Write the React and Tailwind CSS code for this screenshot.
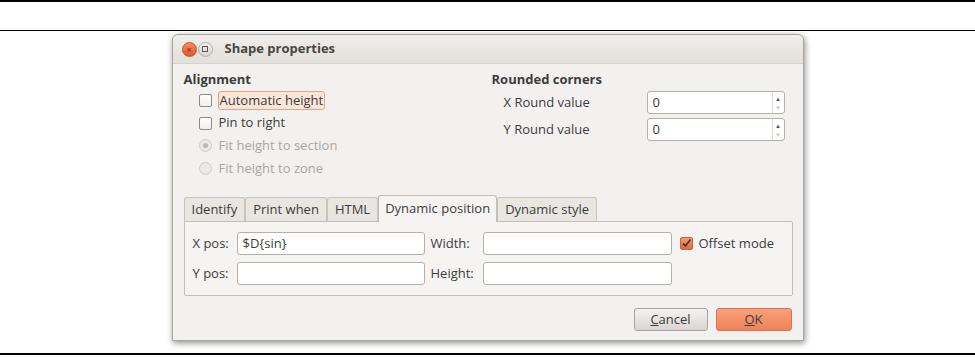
import React from 'react';

const font = { fontFamily: '"Open Sans", "DejaVu Sans", sans-serif' };

function Checkbox({ checked }) {
  if (checked) {
    return (
      <span className="flex h-[13px] w-[13px] items-center justify-center rounded-[2px] border border-[#c8623a] bg-gradient-to-b from-[#f39a72] to-[#e06a3c]">
        <svg width="11" height="11" viewBox="0 0 11 11">
          <path d="M2 5.5 L4.5 8 L9.5 1.5" fill="none" stroke="#3c3c3c" strokeWidth="1.8" />
        </svg>
      </span>
    );
  }
  return <span className="h-[13px] w-[13px] rounded-[2px] border border-[#8f8a84] bg-gradient-to-b from-white to-[#f0eeec]" />;
}

function Radio({ checked }) {
  return (
    <span className="flex h-[13px] w-[13px] items-center justify-center rounded-full border border-[#cfcbc6] bg-[#ebe9e6]">
      {checked && <span className="h-[5px] w-[5px] rounded-full bg-[#bdb9b4]" />}
    </span>
  );
}

function Spin({ value }) {
  return (
    <div className="flex h-[23px] w-[138px] rounded-[3px] border border-[#b5b0aa] bg-white">
      <div className="flex flex-1 items-center pl-[5px] text-[13px] text-[#3c3c3c]">{value}</div>
      <div className="flex w-[12px] flex-col items-center justify-center border-l border-[#e2dfdb] text-[7px] leading-[9px]">
        <span className="text-[#555]">▴</span>
        <span className="text-[#c9c5c0]">▾</span>
      </div>
    </div>
  );
}

function Field({ value, w }) {
  return (
    <div className={`flex h-[23px] items-center rounded-[3px] border border-[#b5b0aa] bg-white pl-[5px] text-[13px] text-[#3c3c3c] ${w}`}>
      {value}
    </div>
  );
}

export default function App() {
  const tabs = ['Identify', 'Print when', 'HTML', 'Dynamic position', 'Dynamic style'];
  return (
    <div className="flex h-[357px] w-[975px] flex-col bg-white" style={font}>
      <div className="h-[2px] bg-black" />
      <div className="mt-[28px] h-px bg-black" />

      <div className="mx-auto mt-[3px] flex h-[307px] w-[632px] flex-col rounded-t-[6px] border border-[#a9a49d] bg-[#f2f1f0] shadow-[1px_2px_6px_rgba(0,0,0,0.45)]">
        {/* Title bar */}
        <div className="flex h-[29px] items-center rounded-t-[6px] border-b border-[#d6d2cc] bg-gradient-to-b from-[#f0eeeb] to-[#e3dfda] pl-[9px]">
          <span className="flex h-[15px] w-[15px] items-center justify-center rounded-full border border-[#c4532c] bg-gradient-to-b from-[#f58a60] to-[#e0572b] text-[9px] leading-none text-[#6b2a14]">×</span>
          <span className="ml-[1px] flex h-[15px] w-[15px] items-center justify-center rounded-full border border-[#b3ada6] bg-gradient-to-b from-[#f4f2ef] to-[#d8d4cf]">
            <span className="h-[6px] w-[6px] border border-[#5a5650]" />
          </span>
          <span className="ml-[12px] text-[13px] font-bold text-[#4a4641]">Shape properties</span>
        </div>

        {/* Body */}
        <div className="flex flex-1 flex-col px-[11px] pt-[7px]">
          <div className="flex">
            <div className="flex w-[308px] flex-col text-[13px]">
              <div className="flex h-[17px] items-center font-bold text-[#3c3c3c]">Alignment</div>
              <div className="ml-[15px] mt-[1px] flex h-[23px] items-center gap-[6px] text-[#3c3c3c]">
                <Checkbox />
                <span className="rounded-[3px] border border-[#f0a07f] bg-[#fbe6dc] px-[1px] leading-[17px]">Automatic height</span>
              </div>
              <div className="ml-[15px] flex h-[22px] items-center gap-[7px] text-[#3c3c3c]">
                <Checkbox />
                <span>Pin to right</span>
              </div>
              <div className="ml-[15px] flex h-[23px] items-center gap-[7px] text-[#aaa6a1]">
                <Radio checked />
                <span>Fit height to section</span>
              </div>
              <div className="ml-[15px] flex h-[23px] items-center gap-[7px] text-[#aaa6a1]">
                <Radio />
                <span>Fit height to zone</span>
              </div>
            </div>

            <div className="flex flex-1 flex-col text-[13px] text-[#3c3c3c]">
              <div className="flex h-[17px] items-center font-bold">Rounded corners</div>
              <div className="mt-[3px] flex h-[23px] items-center">
                <span className="ml-[12px] w-[143px]">X Round value</span>
                <Spin value="0" />
              </div>
              <div className="mt-[4px] flex h-[23px] items-center">
                <span className="ml-[12px] w-[143px]">Y Round value</span>
                <Spin value="0" />
              </div>
            </div>
          </div>

          {/* Tabs */}
          <div className="mt-[15px] flex items-end text-[13px] text-[#3c3c3c]">
            {tabs.map((t) =>
              t === 'Dynamic position' ? (
                <div key={t} className="relative z-10 -mb-px flex h-[27px] items-center rounded-t-[3px] border border-b-0 border-[#c3beb8] bg-[#f5f4f3] px-[6px]">
                  {t}
                </div>
              ) : (
                <div key={t} className="flex h-[24px] items-center rounded-t-[3px] border border-b-0 border-[#c8c3bd] bg-[#e9e6e2] px-[7px]">
                  {t}
                </div>
              )
            )}
          </div>
          <div className="flex h-[75px] w-[609px] flex-col gap-[7px] rounded-b-[2px] rounded-tr-[2px] border border-[#c3beb8] bg-[#f5f4f3] px-[8px] pt-[10px] text-[13px] text-[#3c3c3c]">
            <div className="flex items-center">
              <span className="w-[44px]">X pos:</span>
              <Field value="$D{sin}" w="w-[188px]" />
              <span className="ml-[6px] w-[52px]">Width:</span>
              <Field value="" w="w-[189px]" />
              <span className="ml-[8px] flex items-center gap-[6px]">
                <Checkbox checked />
                Offset mode
              </span>
            </div>
            <div className="flex items-center">
              <span className="w-[44px]">Y pos:</span>
              <Field value="" w="w-[188px]" />
              <span className="ml-[6px] w-[52px]">Height:</span>
              <Field value="" w="w-[189px]" />
            </div>
          </div>

          {/* Buttons */}
          <div className="mt-[12px] flex justify-end gap-[8px] text-[13px]">
            <button className="flex h-[23px] w-[74px] items-center justify-center rounded-[3px] border border-[#a8a39d] bg-gradient-to-b from-[#f4f3f1] to-[#d9d6d2] text-[#3c3c3c]">
              <span><u>C</u>ancel</span>
            </button>
            <button className="flex h-[23px] w-[76px] items-center justify-center rounded-[3px] border border-[#d8734c] bg-gradient-to-b from-[#f7a07c] to-[#ee8258] text-[#3c3c3c]">
              <span><u>O</u>K</span>
            </button>
          </div>
        </div>
      </div>

      <div className="mt-[12px] h-[2px] bg-black" />
    </div>
  );
}
